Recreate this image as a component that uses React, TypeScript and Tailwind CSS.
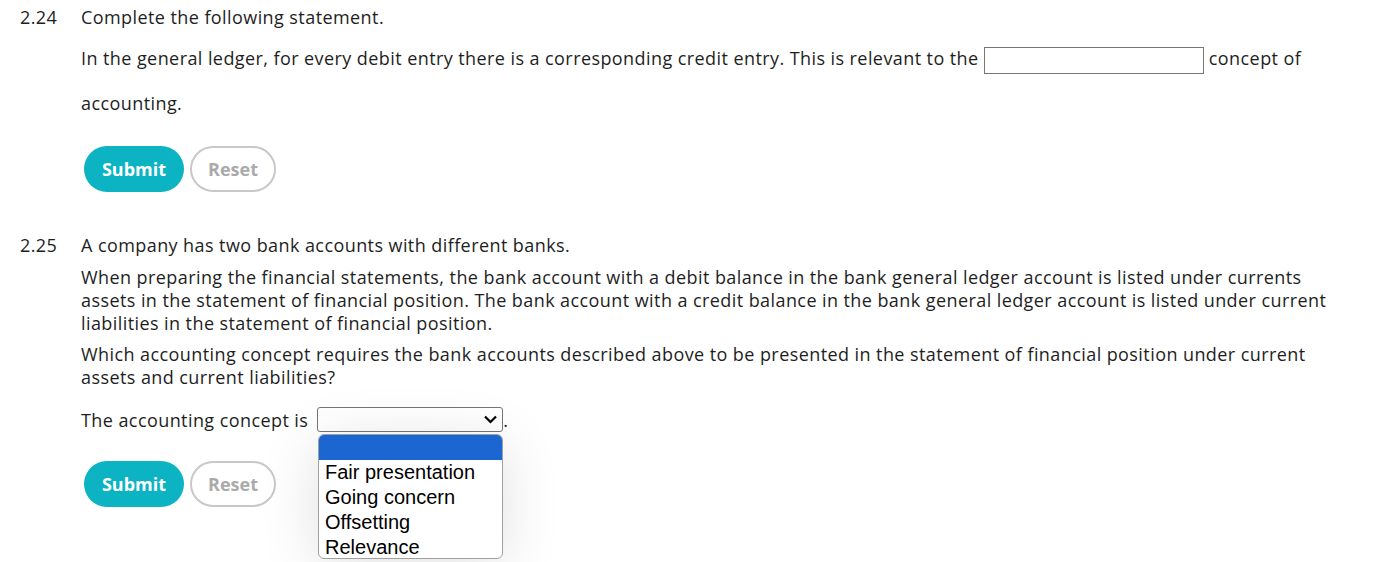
import React from "react";

const font = { fontFamily: "'Open Sans', 'Noto Sans', sans-serif" };

function Buttons() {
  return (
    <div className="flex gap-[6px] pl-[84px]">
      <button className="h-[46px] w-[100px] rounded-full bg-[#0bb3c3] text-[18px] font-bold tracking-normal text-white">Submit</button>
      <button className="h-[46px] w-[86px] rounded-full border-2 border-[#c8c8c8] bg-white text-[18px] font-bold tracking-normal text-[#aaaaaa]">Reset</button>
    </div>
  );
}

export default function App() {
  return (
    <div className="relative h-[562px] w-[1375px] overflow-hidden bg-white text-[18px] tracking-[0.42px] text-[#1e1e1e]" style={font}>
      <div className="pt-[6px]">
        <div className="flex leading-[23px]">
          <div className="w-[81px] pl-[20px]">2.24</div>
          <div>Complete the following statement.</div>
        </div>
        <div className="pl-[81px] pt-[7px] leading-[45px]">
          <div>
            In the general ledger, for every debit entry there is a corresponding credit entry. This is relevant to the{" "}
            <span className="inline-block h-[27px] w-[220px] border border-[#767676] align-middle"></span> concept of
          </div>
          <div>accounting.</div>
        </div>
        <div className="pt-[20px]">
          <Buttons />
        </div>
        <div className="mt-[42px] flex leading-[23px]">
          <div className="w-[81px] pl-[20px]">2.25</div>
          <div>A company has two bank accounts with different banks.</div>
        </div>
        <div className="pl-[81px] pr-[30px] leading-[23px]">
          <p className="mt-[9px]">
            When preparing the financial statements, the bank account with a debit balance in the bank general ledger account is listed under currents assets in the statement of financial position. The bank account with a credit balance in the bank general ledger account is listed under current liabilities in the statement of financial position.
          </p>
          <p className="mt-[8px]">
            Which accounting concept requires the bank accounts described above to be presented in the statement of financial position under current assets and current liabilities?
          </p>
          <div className="mt-[19px] flex h-[25px] items-center">
            <span>The accounting concept is</span>
            <span className="relative ml-[9px] inline-flex h-[25px] w-[186px] -translate-y-[1px] items-center justify-end rounded-[3px] border border-[#767676] pr-[5px]">
              <svg width="13" height="9" viewBox="0 0 13 9" fill="none" stroke="#000" strokeWidth="2.2">
                <path d="M1 1.5 L6.5 7 L12 1.5" />
              </svg>
            </span>
            <span>.</span>
          </div>
        </div>
        <div className="pt-[28px]">
          <Buttons />
        </div>
      </div>
      <div
        className="absolute left-[318px] top-[434px] w-[185px] overflow-hidden rounded-[6px] border border-[#a0a0a0] bg-white tracking-normal shadow-[0_8px_60px_rgba(0,0,0,0.12)]"
        style={{ fontFamily: "'Liberation Sans', Arial, sans-serif" }}
      >
        <div className="h-[25px] bg-[#1b66d0]"></div>
        <div className="pl-[6px] text-[20px] leading-[25px] text-black">
          <div>Fair presentation</div>
          <div>Going concern</div>
          <div>Offsetting</div>
          <div className="h-[23px]">Relevance</div>
        </div>
      </div>
    </div>
  );
}
